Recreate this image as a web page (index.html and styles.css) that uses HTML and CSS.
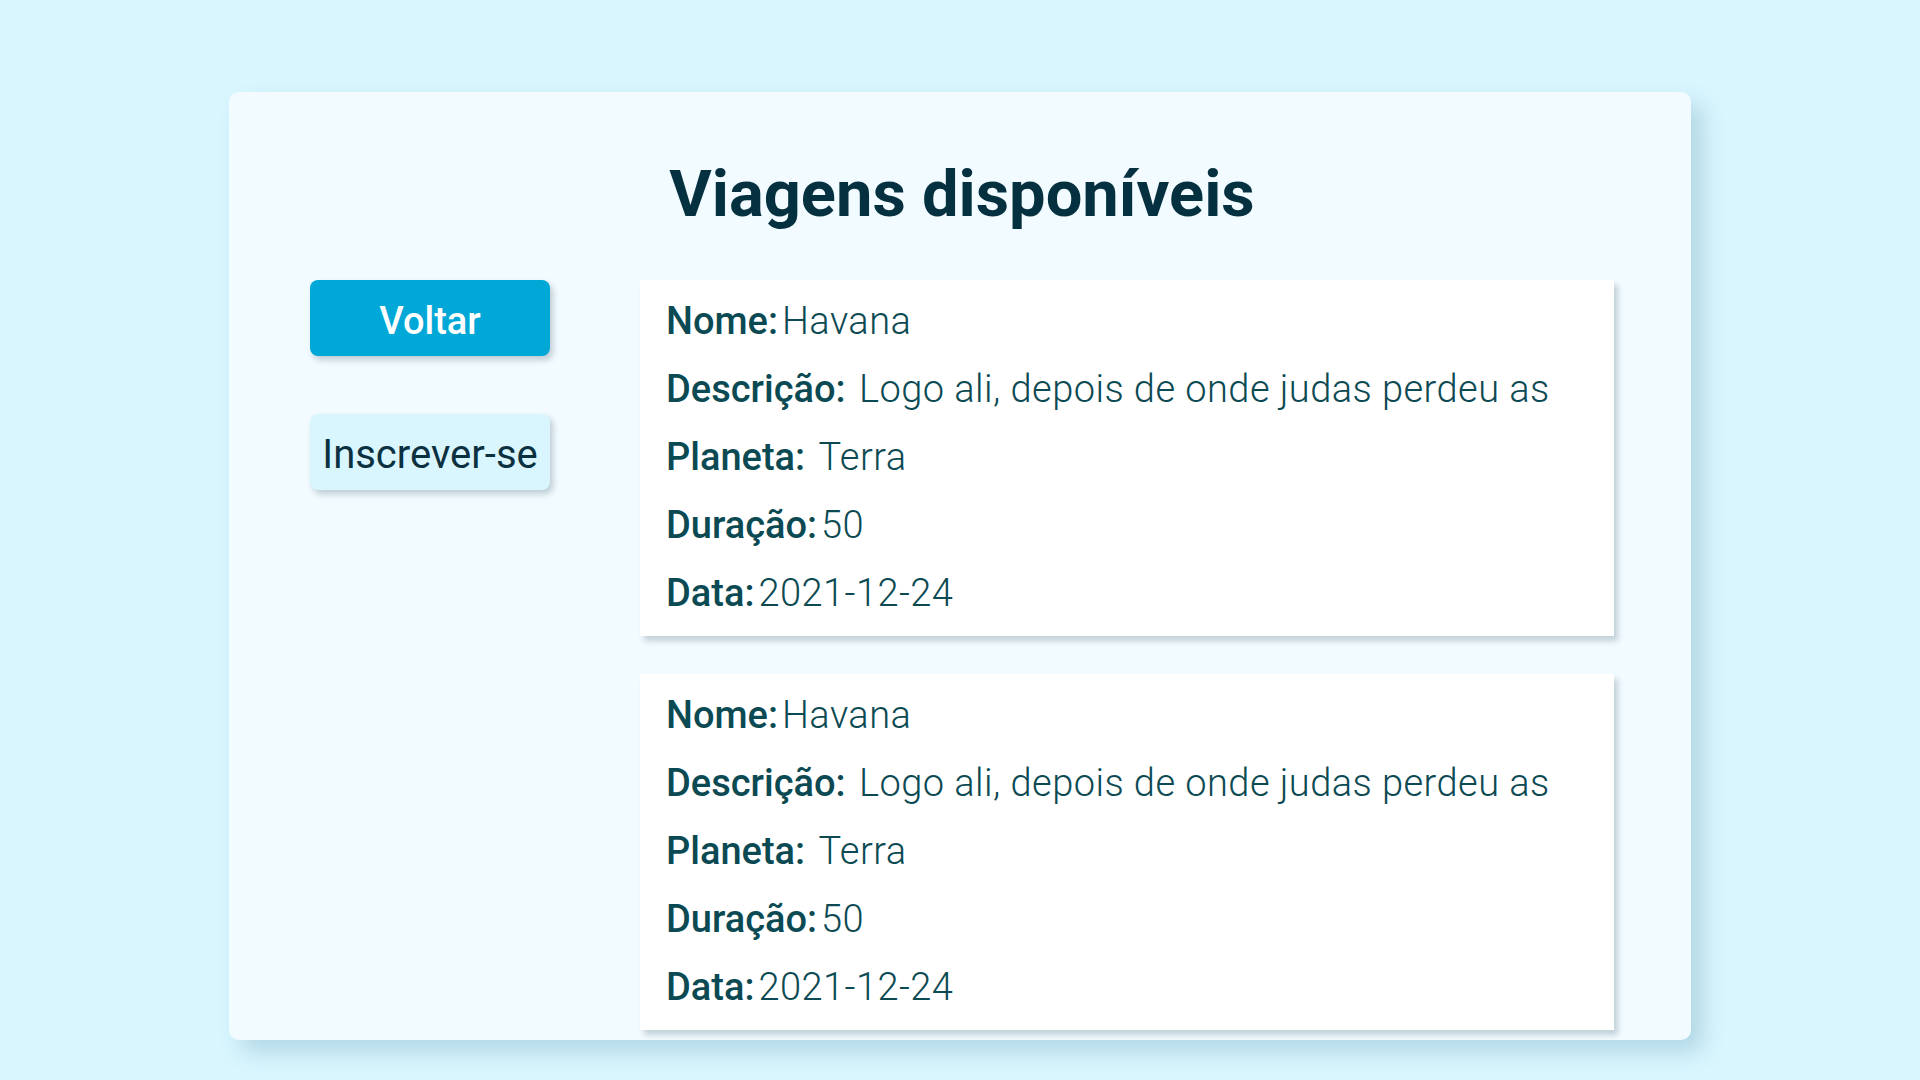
FILE: index.html
```html
<!DOCTYPE html>
<html lang="pt-BR">
<head>
<meta charset="utf-8">
<title>Viagens disponíveis</title>
<link rel="stylesheet" href="styles.css">
</head>
<body>
<main class="panel">
  <h1 class="title">Viagens disponíveis</h1>
  <div class="content">
    <nav class="actions">
      <button class="btn btn-primary">Voltar</button>
      <button class="btn btn-light">Inscrever-se</button>
    </nav>
    <section class="trips">
      <article class="trip">
        <p class="row"><span class="label">Nome:</span><span class="value">Havana</span></p>
        <p class="row"><span class="label">Descrição:</span> <span class="value">Logo ali, depois de onde judas perdeu as</span></p>
        <p class="row"><span class="label">Planeta:</span> <span class="value">Terra</span></p>
        <p class="row"><span class="label">Duração:</span><span class="value">50</span></p>
        <p class="row"><span class="label">Data:</span><span class="value">2021-12-24</span></p>
      </article>
      <article class="trip">
        <p class="row"><span class="label">Nome:</span><span class="value">Havana</span></p>
        <p class="row"><span class="label">Descrição:</span> <span class="value">Logo ali, depois de onde judas perdeu as</span></p>
        <p class="row"><span class="label">Planeta:</span> <span class="value">Terra</span></p>
        <p class="row"><span class="label">Duração:</span><span class="value">50</span></p>
        <p class="row"><span class="label">Data:</span><span class="value">2021-12-24</span></p>
      </article>
    </section>
  </div>
</main>
</body>
</html>
```
FILE: styles.css
```css
* { box-sizing: border-box; }

html, body {
  margin: 0;
  height: 100%;
}

body {
  background: #d9f6fe;
  font-family: Roboto, "Liberation Sans", sans-serif;
  padding-top: 92px;
  overflow: hidden;
}

.panel {
  width: 1462px;
  height: 948px;
  margin: 0 auto;
  background: #f2fbff;
  border-radius: 10px;
  box-shadow: 12px 12px 22px rgba(40, 110, 140, 0.22);
  padding: 62px 77px 0 81px;
  overflow: hidden;
}

.title {
  margin: 0;
  text-align: center;
  font-size: 65px;
  line-height: 80px;
  font-weight: 700;
  color: #04303f;
  letter-spacing: 0;
}

.content {
  display: flex;
  gap: 90px;
  margin-top: 46px;
}

.actions {
  width: 240px;
  flex: none;
  display: flex;
  flex-direction: column;
  gap: 58px;
}

.btn {
  height: 76px;
  width: 240px;
  border: none;
  border-radius: 8px;
  font-family: Roboto, "Liberation Sans", sans-serif;
  font-size: 38px;
  padding: 5px 0 0;
  box-shadow: 3px 4px 6px rgba(0, 40, 60, 0.22);
  cursor: pointer;
}

.btn-primary {
  background: #00a8d8;
  color: #ffffff;
  font-weight: 500;
}

.btn-light {
  background: #d9f6fe;
  color: #0b3040;
  font-weight: 400;
  font-size: 40px;
  padding-top: 4px;
}

.trips {
  flex: 1;
  display: flex;
  flex-direction: column;
  gap: 38px;
}

.trip {
  background: #ffffff;
  padding: 7px 26px 9px;
  box-shadow: 4px 5px 6px rgba(0, 40, 60, 0.2);
}

.row {
  margin: 0;
  font-size: 38px;
  line-height: 68px;
  color: #0c4a53;
  white-space: nowrap;
}

.label {
  font-weight: 500;
  margin-right: 4px;
}

.value {
  font-weight: 300;
  letter-spacing: 0.45px;
}
```
